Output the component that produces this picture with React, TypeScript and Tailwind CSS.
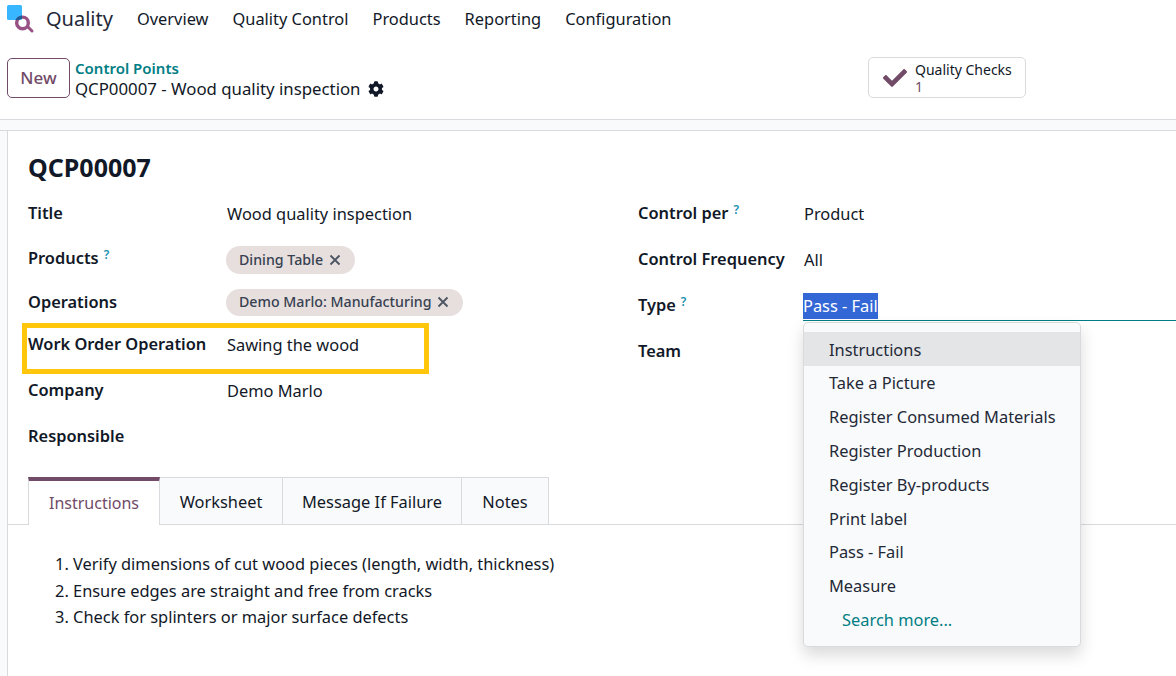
import React from "react";
import { FaCog, FaCheck } from "react-icons/fa";

const Help = () => <sup className="ml-[5px] text-[12px] font-semibold text-[#1a8fb0] relative -top-[5px]">?</sup>;

const Tag = ({ children, h }: { children: React.ReactNode; h: string }) => (
  <span className={`inline-flex items-center ${h} -ml-[1px] rounded-full bg-[#e7dfdd] pl-[13px] pr-[14px] text-[14.2px] font-medium text-[#374151]`}>
    {children}
    <svg viewBox="0 0 12 12" className="ml-[6px] w-[12px] h-[12px]" fill="none" stroke="#4b5563" strokeWidth="1.8"><path d="M1.5 1.5l9 9M10.5 1.5l-9 9" /></svg>
  </span>
);

const Row = ({ label, help, h, children, cls, val }: { label: string; help?: boolean; h: string; children?: React.ReactNode; cls: string; val?: string }) => (
  <div className={`flex items-center ${h}`}>
    <div className={`${cls} shrink-0 font-semibold text-[#111827]`}>{label}{help && <Help />}</div>
    <div className={val ?? "mt-[2px]"}>{children}</div>
  </div>
);

const items = ["Instructions", "Take a Picture", "Register Consumed Materials", "Register Production", "Register By-products", "Print label", "Pass - Fail", "Measure"];

export default function App() {
  return (
    <div className="relative w-[1176px] h-[676px] overflow-hidden bg-white font-['Noto_Sans',sans-serif] text-[16.4px] text-[#111827]">
      <nav className="flex items-center h-[38px] pl-[6px] text-[16.4px]">
        <svg viewBox="0 0 30 30" className="w-[30px] h-[30px]">
          <defs>
            <clipPath id="sq"><rect x="1" y="1" width="15" height="15" rx="1.5" /></clipPath>
          </defs>
          <rect x="1" y="1" width="15" height="15" rx="1.5" fill="#38b6ff" />
          <path d="M22 23l4 4" stroke="#985184" strokeWidth="3" strokeLinecap="round" />
          <circle cx="16.5" cy="18.9" r="5.8" fill="none" stroke="#985184" strokeWidth="3.4" />
          <circle cx="16.5" cy="18.9" r="5.8" fill="none" stroke="#1a5f96" strokeWidth="3.4" clipPath="url(#sq)" />
        </svg>
        <span className="ml-[10px] text-[20px] text-[#1f2937]">Quality</span>
        <span className="ml-[24px]">Overview</span>
        <span className="ml-[24px]">Quality Control</span>
        <span className="ml-[24px]">Products</span>
        <span className="ml-[24px]">Reporting</span>
        <span className="ml-[24px]">Configuration</span>
      </nav>
      <div className="flex h-[82px] border-b border-[#d8dadd] pt-[19px] pl-[7px]">
        <button className="w-[63px] h-[40px] mt-[1px] rounded-[5px] border border-[#714b67] text-[#714b67] font-medium text-[17px] bg-white">New</button>
        <div className="ml-[5px] mt-[1px] leading-[20px] w-[310px] shrink-0">
          <div className="text-[#017e84] font-semibold text-[15px]">Control Points</div>
          <div className="flex items-center mt-[1px] text-[16.8px]">QCP00007 - Wood quality inspection <FaCog className="ml-[8px] w-[16px] h-[16px] text-[#111827]" /></div>
        </div>
        <div className="ml-[483px] w-[158px] h-[41px] rounded-[5px] border border-[#d8dadd] flex items-center pl-[14px]">
          <FaCheck className="w-[24px] h-[24px] text-[#714b67]" />
          <div className="ml-[8px] text-[14px] leading-[17px] pt-[1px]">
            <div>Quality Checks</div>
            <div className="text-[#714b67]">1</div>
          </div>
        </div>
      </div>
      <div className="h-[11px] bg-[#f9fafb] border-b border-[#d8dadd]"></div>
      <div className="flex h-[545px]">
        <div className="w-[8px] shrink-0 bg-[#f9fafb] border-r border-[#d8dadd]"></div>
        <div className="flex-1 min-w-0">
          <h1 className="ml-[20px] mt-[18px] h-[36px] text-[25px] leading-[36px] font-bold text-[#111827]">QCP00007</h1>
          <div className="flex mt-[5px] h-[288px]">
            <div className="ml-[20px] w-[610px]">
              <Row cls="w-[199px]" h="h-[46px]" label="Title">Wood quality inspection</Row>
              <Row cls="w-[199px]" h="h-[44px]" label="Products" help val="mt-[4px]"><Tag h="h-[28px]">Dining Table</Tag></Row>
              <Row cls="w-[199px]" h="h-[44px]" label="Operations" val=""><Tag h="h-[27px]">Demo Marlo: Manufacturing</Tag></Row>
              <Row cls="w-[199px]" h="h-[40px]" label="Work Order Operation">Sawing the wood</Row>
              <Row cls="w-[199px]" h="h-[52px]" label="Company">Demo Marlo</Row>
              <Row cls="w-[199px]" h="h-[40px]" label="Responsible" />
            </div>
            <div className="flex-1">
              <Row cls="w-[166px]" h="h-[46px]" label="Control per" help>Product</Row>
              <Row cls="w-[166px]" h="h-[46px]" label="Control Frequency">All</Row>
              <div className="flex items-center h-[46px] relative">
                <div className="w-[165px] font-semibold">Type<Help /></div>
                <span className="bg-[#3367d6] text-white leading-[26px] mt-[1px]">Pass - Fail</span>
                <div className="absolute left-[165px] right-0 top-[38px] h-px bg-[#017e84]"></div>
              </div>
              <Row cls="w-[166px]" h="h-[46px]" label="Team" />
            </div>
          </div>
          <div className="mt-[-1px] border-b border-[#d8dadd] h-[48px] pl-[20px] flex">
            <div className="w-[132px] h-[48px] border-t-4 border-t-[#714b67] border-l border-r border-[#d8dadd] bg-white flex items-center justify-center text-[#714b67] text-[16px] pb-[1px]">Instructions</div>
            <div className="w-[123px] h-[47px] border-t border-r border-[#d8dadd] bg-[#f9fafb] flex items-center justify-center pt-[2px]">Worksheet</div>
            <div className="w-[179px] h-[47px] border-t border-r border-[#d8dadd] bg-[#f9fafb] flex items-center justify-center pt-[2px]">Message If Failure</div>
            <div className="w-[87px] h-[47px] border-t border-r border-[#d8dadd] bg-[#f9fafb] flex items-center justify-center pt-[2px]">Notes</div>
          </div>
          <ol className="mt-[26px] ml-[47px] list-none leading-[26.5px]">
            <li>1. Verify dimensions of cut wood pieces (length, width, thickness)</li>
            <li>2. Ensure edges are straight and free from cracks</li>
            <li>3. Check for splinters or major surface defects</li>
          </ol>
        </div>
      </div>
      <div className="absolute left-[22px] top-[323px] w-[407px] h-[51px] border-[5px] border-[#ffc60b]"></div>
      <div className="absolute left-[803px] top-[322px] w-[278px] h-[325px] rounded-[5px] border border-[#d8dadd] bg-[#f9fafb] shadow-[0_8px_16px_rgba(0,0,0,0.15)] pt-[9px] text-[#1f2937]">
        {items.map((t, i) => (
          <div key={t} className={`h-[33.8px] flex items-center pl-[25px] pt-[2px] ${i === 0 ? "bg-[#e4e5e7]" : ""}`}>{t}</div>
        ))}
        <div className="h-[33.8px] flex items-center pl-[38px] pt-[2px] text-[#017e84]">Search more...</div>
      </div>
    </div>
  );
}
